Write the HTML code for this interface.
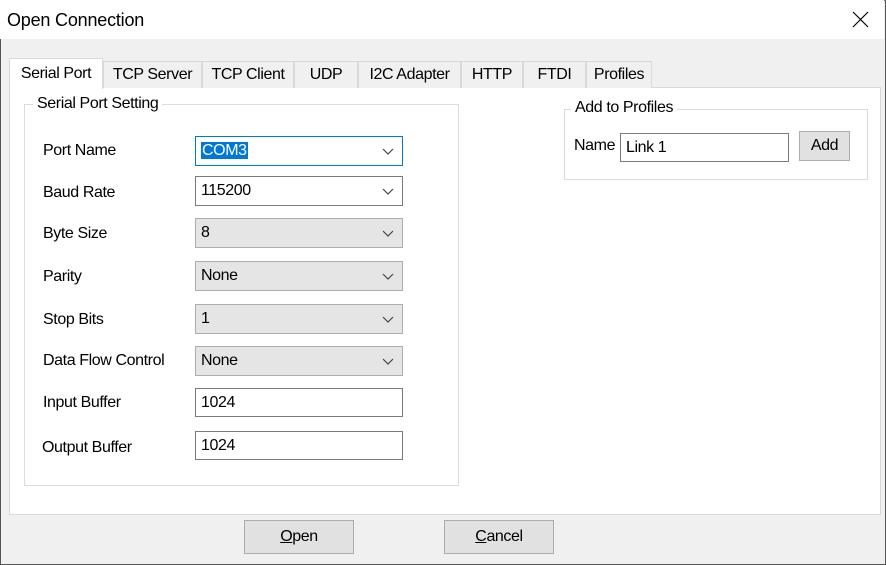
<!DOCTYPE html>
<html><head><meta charset="utf-8"><style>
*{box-sizing:border-box;margin:0;padding:0}
body{width:886px;height:565px;overflow:hidden;background:#f0f0f0;font-family:"Liberation Sans",sans-serif;font-size:16px;color:#000;position:relative;letter-spacing:-0.4px}
.abs{position:absolute}
#win{left:0;top:0;width:886px;height:565px;border:1px solid #555;border-top-color:#777;background:#f0f0f0}
#title{left:0;top:0;width:884px;height:39px;background:#fff}
#title span{position:absolute;left:7px;top:10px;font-size:18px;letter-spacing:-0.2px}
.tab{position:absolute;top:61px;height:27px;background:#f0f0f0;border:1px solid #d9d9d9;border-bottom:none;text-align:center;line-height:26px;font-size:16px}
.tab.sel{top:58px;height:31px;background:#fff;line-height:29px;z-index:2}
#page{left:9px;top:87px;width:872px;height:428px;background:#fff;border:1px solid #d9d9d9}
.grp{position:absolute;border:1px solid #dcdcdc}
.grp .lg{position:absolute;top:-11px;left:8px;background:#fff;padding:0 4px;font-size:16px}
.lbl{position:absolute;font-size:16px}
.cb{position:absolute;left:195px;width:208px;height:30px;border:1px solid #7a7a7a;background:#fff;padding-left:5px;line-height:28px}
.cb.g{background:#e5e5e5;border-color:#adadad}
.cb svg{position:absolute;right:8px;top:11px}
.tb{position:absolute;height:29px;border:1px solid #7a7a7a;background:#fff;padding-left:5px;line-height:27px}
.btn{position:absolute;background:#e1e1e1;border:1px solid #adadad;text-align:center;font-size:16px}
</style></head><body>
<div id="win" class="abs"></div>
<div id="title" class="abs"><span>Open Connection</span>
<svg class="abs" style="left:852px;top:11px" width="17" height="17" viewBox="0 0 17 17"><path d="M1 1L16 16M16 1L1 16" stroke="#000" stroke-width="1.2"/></svg></div>
<div id="page" class="abs"></div>
<div class="tab sel" style="left:9px;width:94px">Serial Port</div>
<div class="tab" style="left:103px;width:99px">TCP Server</div>
<div class="tab" style="left:202px;width:92px">TCP Client</div>
<div class="tab" style="left:294px;width:64px">UDP</div>
<div class="tab" style="left:358px;width:103px">I2C Adapter</div>
<div class="tab" style="left:461px;width:62px">HTTP</div>
<div class="tab" style="left:523px;width:63px">FTDI</div>
<div class="tab" style="left:586px;width:66px">Profiles</div>

<div class="grp" style="left:24px;top:104px;width:435px;height:382px"><span class="lg" style="top:-10px">Serial Port Setting</span></div>
<div class="lbl" style="left:43px;top:142px">Port Name</div>
<div class="lbl" style="left:43px;top:184px">Baud Rate</div>
<div class="lbl" style="left:43px;top:225px">Byte Size</div>
<div class="lbl" style="left:43px;top:268px">Parity</div>
<div class="lbl" style="left:43px;top:311px">Stop Bits</div>
<div class="lbl" style="left:43px;top:352px">Data Flow Control</div>
<div class="lbl" style="left:43px;top:394px">Input Buffer</div>
<div class="lbl" style="left:42px;top:439px">Output Buffer</div>

<svg width="0" height="0" style="position:absolute"><defs><path id="chev" d="M1 1L6 6L11 1" fill="none" stroke="#444" stroke-width="1.2"/></defs></svg>
<div class="cb" style="top:136px;border-color:#0078d7"><span style="background:#0078d7;color:#fff;padding:0 1px">COM3</span><svg width="12" height="8"><use href="#chev"/></svg></div>
<div class="cb" style="top:176px">115200<svg width="12" height="8"><use href="#chev"/></svg></div>
<div class="cb g" style="top:218px">8<svg width="12" height="8"><use href="#chev"/></svg></div>
<div class="cb g" style="top:261px">None<svg width="12" height="8"><use href="#chev"/></svg></div>
<div class="cb g" style="top:304px">1<svg width="12" height="8"><use href="#chev"/></svg></div>
<div class="cb g" style="top:346px">None<svg width="12" height="8"><use href="#chev"/></svg></div>
<div class="tb" style="left:195px;top:388px;width:208px">1024</div>
<div class="tb" style="left:195px;top:431px;width:208px">1024</div>

<div class="grp" style="left:564px;top:109px;width:304px;height:71px"><span class="lg" style="left:6px">Add to Profiles</span></div>
<div class="lbl" style="left:574px;top:137px">Name</div>
<div class="tb" style="left:620px;top:133px;width:169px">Link 1</div>
<div class="btn" style="left:799px;top:131px;width:51px;height:30px;line-height:27px">Add</div>

<div class="btn" style="left:244px;top:520px;width:110px;height:34px;line-height:32px"><u>O</u>pen</div>
<div class="btn" style="left:444px;top:520px;width:110px;height:34px;line-height:32px"><u>C</u>ancel</div>
</body></html>
